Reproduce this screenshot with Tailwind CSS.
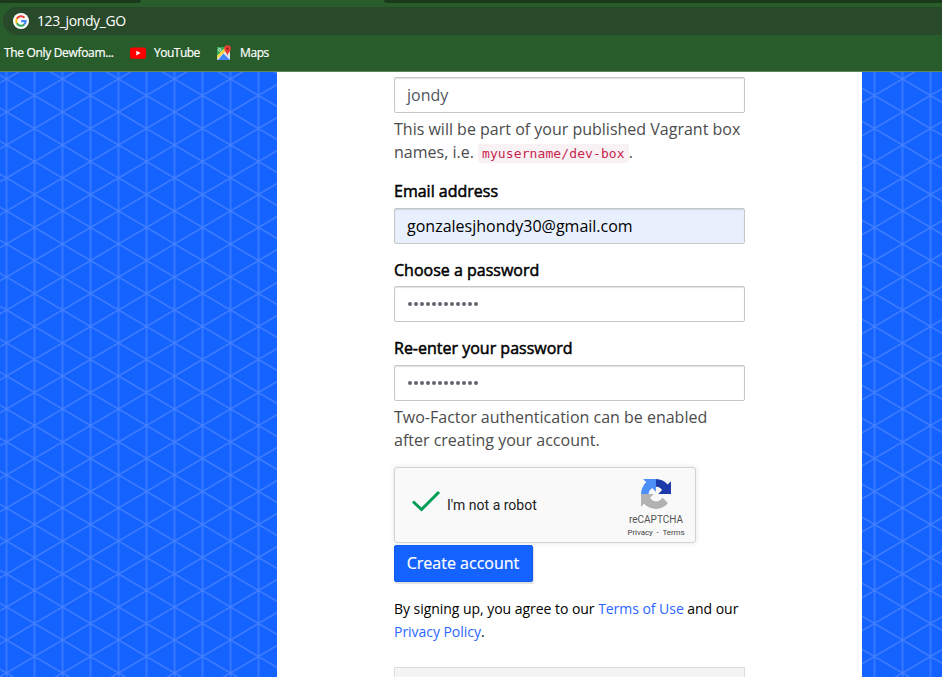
<!DOCTYPE html>
<html lang="en">
<head>
<meta charset="utf-8">
<title>Create account</title>
<script src="https://cdn.jsdelivr.net/npm/@tailwindcss/browser@4"></script>
</head>
<body class="h-[677px] w-[942px] overflow-hidden bg-white font-['Open_Sans',sans-serif]">
<!-- browser chrome -->
<header class="flex h-[72px] flex-col border-b border-[#5c8560] bg-[#285d2b] text-white">
  <div class="flex h-[7px] items-start justify-between">
    <div class="h-[3px] w-[141px] rounded-br-[3px] bg-[#1b3a1b]"></div>
    <div class="h-[3px] w-[558px] rounded-bl-[3px] bg-[#1b3a1b]"></div>
  </div>
  <div class="ml-[3px] flex h-7 items-center rounded-l-full bg-[#284a2a] pl-[10px]">
    <svg class="h-4 w-4" viewBox="0 0 16 16" fill="none"><circle cx="8" cy="8" r="8" fill="#fff"/><g stroke-width="2.1"><path d="M11.5 4.7A4.8 4.8 0 0 0 3.8 5.8" stroke="#ea4335"/><path d="M3.8 5.8A4.8 4.8 0 0 0 3.8 10.3" stroke="#fbbc05"/><path d="M3.8 10.3A4.8 4.8 0 0 0 11.2 11.6" stroke="#34a853"/><path d="M11.2 11.6A4.7 4.7 0 0 0 12.7 8.1H8.1" stroke="#4285f4"/></g></svg>
    <span class="ml-2 text-[14px] leading-7 tracking-[-0.4px]">123_jondy_GO</span>
  </div>
  <nav class="flex h-9 items-center pl-1 text-[12px] leading-9">
    <span class="w-[126px] whitespace-nowrap tracking-[-0.33px] [-webkit-text-stroke:0.2px_white]">The Only Dewfoam...</span>
    <svg class="h-4 w-4" viewBox="0 0 16 16"><rect y="2.4" width="16" height="11.4" rx="2.6" fill="#f00"/><path d="M6.3 5.7v4.8L10.6 8.1z" fill="#fff"/></svg>
    <span class="ml-2 w-[62px] tracking-[-0.5px] [-webkit-text-stroke:0.2px_white]">YouTube</span>
    <svg class="h-4 w-4" viewBox="0 0 16 16"><rect x="1" y="2" width="13" height="13" rx="1" fill="#e5e8ec"/><path d="M1 3q0-1 1-1h8L1 11z" fill="#34a853"/><path d="M1 11 10 2l2 2L1 14z" fill="#fdd835"/><path d="M7.5 8.5 14 15H2z" fill="#4285f4"/><path d="M7.5 8.5 9 7l5 5v2z" fill="#dfe3e7"/><circle cx="3.7" cy="4.8" r="1.3" fill="none" stroke="#fff" stroke-width=".8"/><path d="M11.5 11C11.2 8 8.2 6.8 8.2 3.6a3.3 3.3 0 0 1 6.6 0C14.800 6.800 11.800 8 11.500 11z" fill="#ea4335"/><circle cx="11.5" cy="3.7" r="1.2" fill="#961b15"/></svg>
    <span class="ml-2 tracking-[-0.4px] [-webkit-text-stroke:0.2px_white]">Maps</span>
  </nav>
</header>
<main class="relative isolate flex h-[605px] justify-center bg-[#1563ff]">
  <svg class="absolute inset-0 -z-10 h-full w-full">
    <defs><pattern id="grid" x="6.5" y="7" width="56" height="33" patternUnits="userSpaceOnUse"><path d="M0 0V33M28 0V33M56 0V33M-56 -33 112 66M-56 66 112 -33" stroke="#437fff" stroke-width="1.4" fill="none"/></pattern></defs>
    <rect width="100%" height="100%" fill="url(#grid)"/>
  </svg>
  <section class="ml-[277px] mr-[80px] h-full w-[585px] shrink-0 bg-white px-[117px] pt-[5px] text-[16px] leading-[23px] text-black">
    <div class="h-9 rounded-[2px] border border-[#c6c7c9] px-3 leading-[35px] text-[#525761] shadow-[inset_0_1px_1px_rgba(0,0,0,0.12)]">jondy</div>
    <p class="mt-[5px] h-[62px] whitespace-nowrap text-[#4c4c4c]">This will be part of your published Vagrant box<br>names, i.e. <code class="rounded-[2px] bg-[#f9f2f4] px-1 py-[2px] font-['DejaVu_Sans_Mono',monospace] text-[13px] tracking-[0.1px] text-[#c7254e]">myusername/dev-box</code>.</p>
    <div class="h-7 text-[16px] leading-[23px] [-webkit-text-stroke:0.5px_black]">Email address</div>
    <div class="h-9 rounded-[2px] border border-[#c6c7c9] bg-[#e8f0fe] px-3 leading-[35px] shadow-[inset_0_1px_1px_rgba(0,0,0,0.12)]">gonzalesjhondy30@gmail.com</div>
    <div class="mt-[15px] h-[27px] [-webkit-text-stroke:0.5px_black]">Choose a password</div>
    <div class="flex h-9 items-center gap-[2px] rounded-[2px] border border-[#c6c7c9] px-[13px] shadow-[inset_0_1px_1px_rgba(0,0,0,0.12)]">
      <i class="h-1 w-1 rounded-full bg-[#62666f]"></i><i class="h-1 w-1 rounded-full bg-[#62666f]"></i><i class="h-1 w-1 rounded-full bg-[#62666f]"></i><i class="h-1 w-1 rounded-full bg-[#62666f]"></i><i class="h-1 w-1 rounded-full bg-[#62666f]"></i><i class="h-1 w-1 rounded-full bg-[#62666f]"></i><i class="h-1 w-1 rounded-full bg-[#62666f]"></i><i class="h-1 w-1 rounded-full bg-[#62666f]"></i><i class="h-1 w-1 rounded-full bg-[#62666f]"></i><i class="h-1 w-1 rounded-full bg-[#62666f]"></i><i class="h-1 w-1 rounded-full bg-[#62666f]"></i><i class="h-1 w-1 rounded-full bg-[#62666f]"></i>
    </div>
    <div class="mt-[15px] h-7 [-webkit-text-stroke:0.5px_black]">Re-enter your password</div>
    <div class="flex h-9 items-center gap-[2px] rounded-[2px] border border-[#c6c7c9] px-[13px] shadow-[inset_0_1px_1px_rgba(0,0,0,0.12)]">
      <i class="h-1 w-1 rounded-full bg-[#62666f]"></i><i class="h-1 w-1 rounded-full bg-[#62666f]"></i><i class="h-1 w-1 rounded-full bg-[#62666f]"></i><i class="h-1 w-1 rounded-full bg-[#62666f]"></i><i class="h-1 w-1 rounded-full bg-[#62666f]"></i><i class="h-1 w-1 rounded-full bg-[#62666f]"></i><i class="h-1 w-1 rounded-full bg-[#62666f]"></i><i class="h-1 w-1 rounded-full bg-[#62666f]"></i><i class="h-1 w-1 rounded-full bg-[#62666f]"></i><i class="h-1 w-1 rounded-full bg-[#62666f]"></i><i class="h-1 w-1 rounded-full bg-[#62666f]"></i><i class="h-1 w-1 rounded-full bg-[#62666f]"></i>
    </div>
    <p class="mt-[5px] h-[61px] whitespace-nowrap text-[#4c4c4c]">Two-Factor authentication can be enabled<br>after creating your account.</p>
    <div class="flex h-[76px] w-[302px] rounded-[3px] border border-[#d3d3d3] bg-[#f9f9f9] font-[Roboto,sans-serif] shadow-[0_0_4px_1px_rgba(0,0,0,0.08)]">
      <svg class="ml-[16px] mt-[22px] h-6 w-[30px] shrink-0" viewBox="0 0 30 24" fill="none"><path d="M2 11.500 10.500 19.500 28 2" stroke="#009e55" stroke-width="3"/></svg>
      <span class="ml-[6px] w-[167px] shrink-0 text-[14px] leading-[74px] text-[#222]">I'm not a robot</span>
      <div class="flex w-[81px] shrink-0 flex-col items-center pl-[3px] text-[#555]">
        <svg class="mt-[11px] h-[30px] w-[30px]" viewBox="0 0 64 64"><path d="M64 31.955l-.033-1.370V4.687l-7.160 7.160C50.948 4.674 42.033.093 32.050.093c-10.400 0-19.622 4.960-25.458 12.640l11.736 11.860a15.550 15.550 0 0 1 4.754-5.334c2.050-1.600 4.952-2.906 8.968-2.906.485 0 .860.057 1.135.163 4.976.393 9.288 3.140 11.828 7.124l-8.307 8.307L64 31.953" fill="#1c3aa9"/><path d="M31.862.094l-1.370.033H4.594l7.160 7.160C4.580 13.147 0 22.060 0 32.046c0 10.400 4.960 19.622 12.640 25.458L24.500 45.768a15.550 15.550 0 0 1-5.334-4.754c-1.600-2.050-2.906-4.952-2.906-8.968 0-.485.057-.860.163-1.135.393-4.976 3.140-9.288 7.124-11.828l8.307 8.307L31.860.095" fill="#4c8ff7"/><path d="M.001 32.045l.033 1.370v25.898l7.160-7.160c5.860 7.173 14.774 11.754 24.760 11.754 10.400 0 19.622-4.960 25.458-12.640l-11.736-11.860a15.550 15.550 0 0 1-4.754 5.334c-2.050 1.600-4.952 2.906-8.968 2.906-.485 0-.860-.057-1.135-.163-4.976-.393-9.288-3.140-11.828-7.124l8.307-8.307c-10.522.040-22.400.066-27.295-.005" fill="#b2b2b2"/></svg>
        <span class="mt-[5px] text-[10px] leading-[12px]">reCAPTCHA</span>
        <span class="mt-[2px] whitespace-pre text-[8px] leading-[10px] tracking-[-0.07px] text-[#444]">Privacy  -  Terms</span>
      </div>
    </div>
    <button class="mt-[2px] block h-[37px] w-[139px] rounded-[2px] border border-[#0f5af0] bg-[#1563ff] pr-px text-center leading-[35px] text-white shadow-[1px_2px_1px_rgba(0,0,0,0.12)] [-webkit-text-stroke:0.2px_white]">Create account</button>
    <p class="mt-[15px] h-[70px] whitespace-nowrap text-[14px] leading-[23px] tracking-[-0.04px]">By signing up, you agree to our <a class="text-[#2a66ff]">Terms of Use</a> and our<br><a class="text-[#2a66ff]">Privacy Policy</a>.</p>
    <div class="h-[10px] border border-b-0 border-[#dcdcdc] bg-[#f4f4f4]"></div>
  </section>
</main>
</body>
</html>
